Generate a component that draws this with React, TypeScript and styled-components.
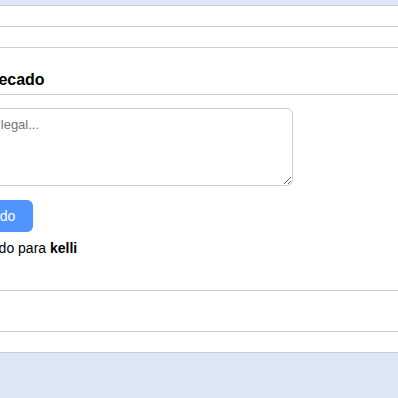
import React, { useState } from "react";
import styled, { createGlobalStyle } from "styled-components";

const GlobalStyle = createGlobalStyle`
  html, body {
    margin: 0;
    padding: 0;
    background: #dce6f7;
    font-family: "Liberation Sans", Arial, sans-serif;
    overflow: hidden;
  }
`;

const Page = styled.div`
  padding-top: 5px;
  height: 398px;
  box-sizing: border-box;
`;

// card is scrolled partly out of view on the left
const Card = styled.div`
  margin-left: -87px;
  width: calc(100% + 87px);
  background: #fff;
  border-top: 1px solid #ccc;
`;

const Row = styled.div<{ $h: number }>`
  height: ${(p) => p.$h}px;
  border-bottom: 1px solid #ccc;
`;

const Section = styled.section`
  border-bottom: 1px solid #ccc;
  padding-bottom: 34px;
`;

const Title = styled.h3`
  margin: 0;
  padding: 23px 0 5px;
  font-size: 16px;
  font-weight: bold;
  color: #000;
  border-bottom: 1px solid #ccc;
`;

const Form = styled.form`
  padding-top: 13px;
`;

const TextArea = styled.textarea`
  display: block;
  box-sizing: border-box;
  width: 380px;
  height: 78px;
  padding: 8px;
  border: 1px solid #ccc;
  border-radius: 6px;
  font-family: "Liberation Sans", Arial, sans-serif;
  font-size: 13px;
  outline: none;

  &::placeholder {
    color: #757575;
  }
`;

const Button = styled.button`
  display: block;
  margin-top: 14px;
  height: 32px;
  padding: 0 18px 0 16px;
  background: #4f94ff;
  color: #fff;
  border: none;
  border-radius: 6px;
  font-family: "Liberation Sans", Arial, sans-serif;
  font-size: 14px;
  cursor: pointer;
`;

const Status = styled.p`
  margin: 8px 0 0;
  font-size: 14px;
  color: #000;
`;

export default function App() {
  const [msg, setMsg] = useState("");

  return (
    <Page>
      <GlobalStyle />
      <Card>
        <Row $h={20} />
        <Row $h={20} />
        <Section>
          <Title>Deixe seu recado</Title>
          <Form onSubmit={(e) => e.preventDefault()}>
            <TextArea
              placeholder="Escreva algo legal..."
              value={msg}
              onChange={(e) => setMsg(e.target.value)}
            />
            <Button type="submit">Enviar recado</Button>
          </Form>
          <Status>
            Recado enviado para <b>kelli</b>
          </Status>
        </Section>
        <Row $h={40} />
        <Row $h={20} />
      </Card>
    </Page>
  );
}
